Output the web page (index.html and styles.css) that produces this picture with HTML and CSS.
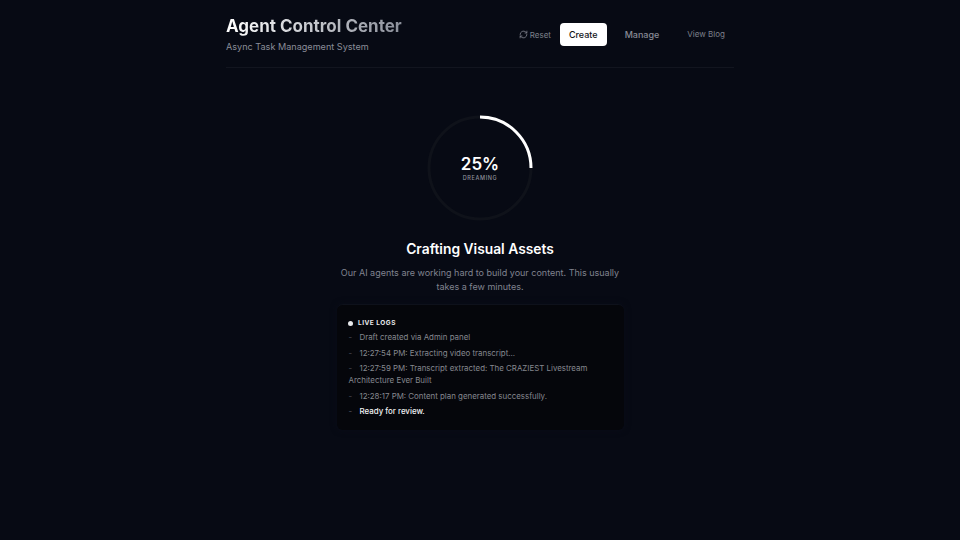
FILE: index.html
```html
<!DOCTYPE html>
<html lang="en">
  <head>
    <meta charset="UTF-8" />
    <meta name="viewport" content="width=device-width, initial-scale=1.0" />
    <title>Agent Control Center</title>
    <link rel="stylesheet" href="styles.css">
  </head>
  <body>
    <div class="container">
      <header class="header">
        <div class="brand">
          <h1>Agent Control Center</h1>
          <p>Async Task Management System</p>
        </div>
        <nav class="nav">
          <button class="reset">
            <svg viewBox="0 0 24 24" width="9" height="9" fill="none" stroke="currentColor" stroke-width="2.2" stroke-linecap="round" stroke-linejoin="round">
              <path d="M3 12a9 9 0 0 1 15-6.7L21 8" />
              <path d="M21 3v5h-5" />
              <path d="M21 12a9 9 0 0 1-15 6.7L3 16" />
              <path d="M8 16H3v5" />
            </svg>
            Reset
          </button>
          <button class="tab active">Create</button>
          <button class="tab">Manage</button>
          <a class="blog" href="#">View Blog</a>
        </nav>
      </header>

      <main class="status">
        <div class="ring">
          <svg viewBox="0 0 108 108" width="108" height="108">
            <circle cx="54" cy="54" r="51" fill="none" stroke="#0f121a" stroke-width="3" />
            <path d="M54 3A51 51 0 0 1 105 54" fill="none" stroke="#ffffff" stroke-width="3" />
          </svg>
          <div class="ring-label">
            <div class="percent">25%</div>
            <div class="phase">DREAMING</div>
          </div>
        </div>
        <h2>Crafting Visual Assets</h2>
        <p class="lead">Our AI agents are working hard to build your content. This usually takes a few minutes.</p>
        <div class="logs">
          <div class="logs-title"><span class="dot"></span>LIVE LOGS</div>
          <div class="log">Draft created via Admin panel</div>
          <div class="log">12:27:54 PM: Extracting video transcript...</div>
          <div class="log">12:27:59 PM: Transcript extracted: The CRAZIEST Livestream Architecture Ever Built</div>
          <div class="log">12:28:17 PM: Content plan generated successfully.</div>
          <div class="log last">Ready for review.</div>
        </div>
      </main>
    </div>
  </body>
</html>
```

FILE: styles.css
```css
body {
  margin: 0;
  height: 540px;
  overflow: hidden;
  background: #070a14;
  color: #ffffff;
  font-family: Inter, "Liberation Sans", sans-serif;
}
.container {
  width: 508px;
  margin: 0 auto;
}
.header {
  display: flex;
  justify-content: space-between;
  align-items: flex-start;
  height: 68px;
  box-sizing: border-box;
  padding-top: 16px;
  border-bottom: 1px solid #12151f;
}
.brand h1 {
  margin: 0;
  font-size: 17px;
  line-height: 21px;
  font-weight: 700;
  background: linear-gradient(to right, #ffffff, #8b8f9a);
  background-clip: text;
  -webkit-background-clip: text;
  color: transparent;
}
.brand p {
  margin: 3px 0 0;
  font-size: 9.1px;
  line-height: 14px;
  color: #8a8d98;
}
.nav {
  display: flex;
  align-items: center;
  margin-top: 7px;
  margin-right: 9px;
}
button {
  border: none;
  background: none;
  font-family: inherit;
  cursor: pointer;
}
.reset {
  display: flex;
  align-items: center;
  gap: 2px;
  padding: 0;
  margin-right: 9px;
  font-size: 8px;
  color: #7d808b;
}
.tab {
  height: 23px;
  padding: 0 9px;
  border-radius: 4px;
  font-size: 9px;
  font-weight: 500;
  color: #878a96;
}
.tab.active {
  background: #ffffff;
  color: #111318;
  margin-right: 9px;
}
.blog {
  margin-left: 19px;
  margin-top: -2px;
  font-size: 8px;
  color: #7d808b;
  text-decoration: none;
}
.status {
  display: flex;
  flex-direction: column;
  align-items: center;
}
.ring {
  position: relative;
  width: 108px;
  height: 108px;
  margin-top: 45.5px;
}
.ring svg {
  display: block;
}
.ring-label {
  position: absolute;
  inset: 0;
  display: flex;
  flex-direction: column;
  align-items: center;
  justify-content: center;
  padding-top: 1px;
}
.percent {
  font-size: 17px;
  line-height: 20px;
  font-weight: 600;
}
.phase {
  font-size: 5.5px;
  line-height: 8px;
  letter-spacing: 0.65px;
  font-weight: 500;
  color: #8f929d;
}
.status h2 {
  margin: 17.5px 0 0;
  font-size: 13.8px;
  line-height: 20px;
  font-weight: 600;
}
.lead {
  width: 300px;
  margin: 7px 0 0;
  text-align: center;
  font-size: 9px;
  line-height: 14px;
  color: #80838f;
}
.logs {
  width: 287px;
  height: 126px;
  box-sizing: border-box;
  margin-top: 10px;
  padding: 12px;
  background: #05060b;
  border-top: 1px solid #0e111b;
  border-radius: 6px;
  box-shadow: 0 0 6px #0a0d18;
  font-size: 7.9px;
  line-height: 12px;
  color: #85888f;
}
.logs-title {
  display: flex;
  align-items: center;
  gap: 5px;
  margin-bottom: 2px;
  font-size: 6.5px;
  letter-spacing: 0.5px;
  font-weight: 700;
  color: #e8e9ec;
}
.dot {
  width: 5px;
  height: 5px;
  margin-left: -0.5px;
  border-radius: 50%;
  background: #e8e9ec;
}
.log {
  margin-bottom: 3.5px;
}
.log::before {
  content: "-";
  display: inline-block;
  width: 11px;
  color: #4a4d57;
}
.log.last {
  color: #f2f2f4;
  font-weight: 500;
}
```
